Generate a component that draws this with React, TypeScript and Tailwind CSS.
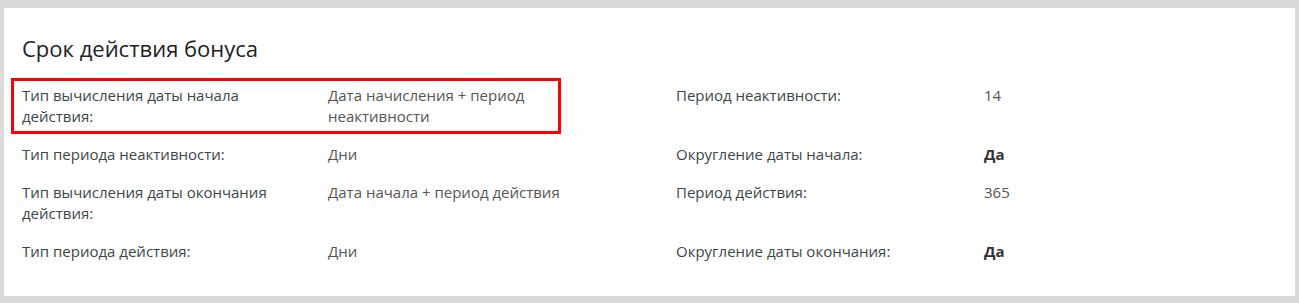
import React from "react";

type Cell = { label: string; value: string; bold?: boolean };
type Row = { left: Cell; right: Cell; highlight?: boolean };

const rows: Row[] = [
  {
    left: { label: "Тип вычисления даты начала действия:", value: "Дата начисления + период неактивности" },
    right: { label: "Период неактивности:", value: "14" },
    highlight: true,
  },
  {
    left: { label: "Тип периода неактивности:", value: "Дни" },
    right: { label: "Округление даты начала:", value: "Да", bold: true },
  },
  {
    left: { label: "Тип вычисления даты окончания действия:", value: "Дата начала + период действия" },
    right: { label: "Период действия:", value: "365" },
  },
  {
    left: { label: "Тип периода действия:", value: "Дни" },
    right: { label: "Округление даты окончания:", value: "Да", bold: true },
  },
];

export default function App() {
  return (
    <div
      className="w-[1299px] h-[303px] bg-[#dadada] pt-[8px] pl-[4px] pr-[4px] pb-[7px]"
      style={{ fontFamily: '"Open Sans", "Noto Sans", sans-serif' }}
    >
      <div className="bg-white h-full w-full pt-[25px] pl-[7px]">
        <h2 className="text-[22px] leading-[30px] text-[#222] pl-[11px] font-normal">Срок действия бонуса</h2>
        <div className="mt-[15px] flex flex-col gap-[3px] text-[15px] leading-[21px]">
          {rows.map((r, i) => (
            <div key={i} className="flex items-start">
              <div
                className={
                  "w-[550px] shrink-0 flex py-[4px] pl-[8px] border-[3px] " +
                  (r.highlight ? "border-[#ff0000]" : "border-transparent")
                }
              >
                <div className="w-[306px] shrink-0 pr-[30px] text-[#3b4747]">{r.left.label}</div>
                <div className="w-[260px] shrink-0 text-[#555]">{r.left.value}</div>
              </div>
              <div className="ml-[115px] flex py-[7px]">
                <div className="w-[308px] text-[#3b4747]">{r.right.label}</div>
                <div className={r.right.bold ? "font-bold text-[#333]" : "text-[#555]"}>{r.right.value}</div>
              </div>
            </div>
          ))}
        </div>
      </div>
    </div>
  );
}
